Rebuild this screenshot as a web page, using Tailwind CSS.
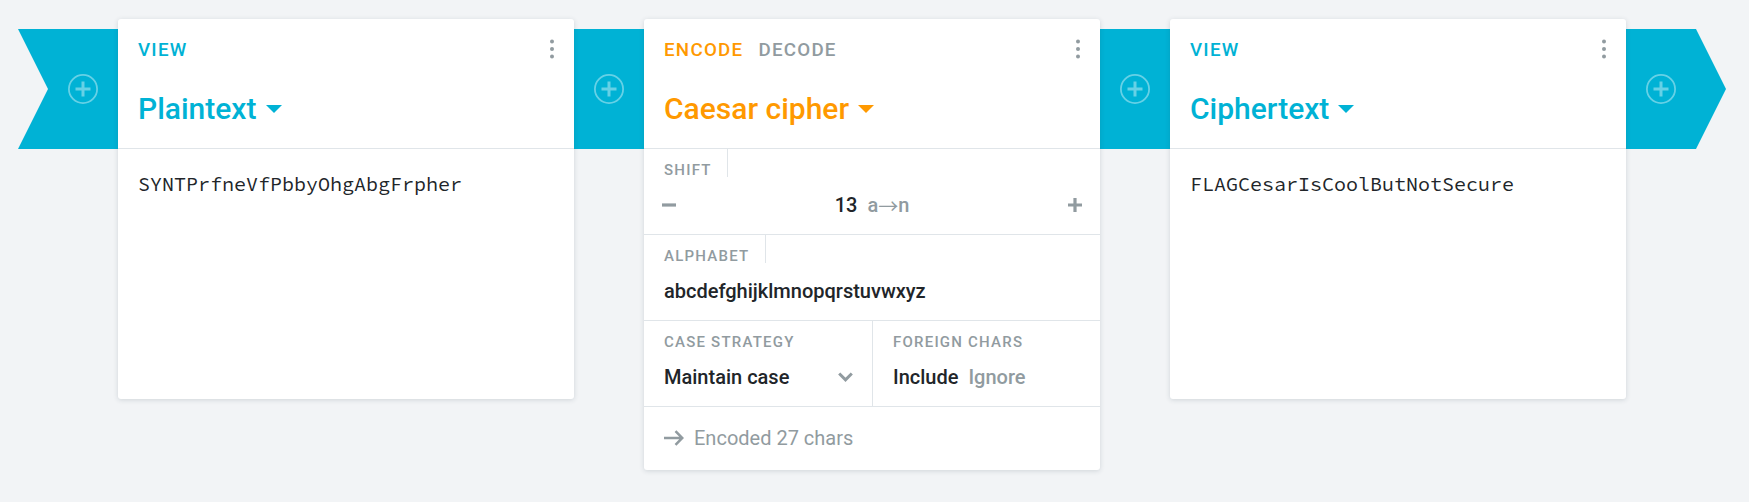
<!DOCTYPE html>
<html lang="en">
<head>
<meta charset="utf-8">
<title>Caesar cipher pipeline</title>
<script src="https://cdn.jsdelivr.net/npm/@tailwindcss/browser@4"></script>
</head>
<body class="h-[502px] overflow-hidden bg-[#f2f4f6] font-[Roboto,sans-serif] text-xl leading-6 text-[#212529]">
<svg class="hidden">
  <symbol id="add" viewBox="0 0 30 30">
    <circle cx="15" cy="15" r="14.1" fill="none" stroke="currentColor" stroke-width="1.8"/>
    <path d="M7.5 15h15M15 7.5v15" fill="none" stroke="currentColor" stroke-width="3"/>
  </symbol>
  <symbol id="dots" viewBox="0 0 4 20">
    <circle cx="2" cy="2.5" r="2"/><circle cx="2" cy="10" r="2"/><circle cx="2" cy="17.5" r="2"/>
  </symbol>
  <symbol id="caret" viewBox="0 0 16 8"><path d="M0 0h16L8 8z"/></symbol>
</svg>
<main class="flex items-start pl-[18px] pt-[19px]">
  <div class="mt-2.5 flex h-[120px] w-[100px] items-center justify-end bg-[#00b2d5] pr-5 [clip-path:polygon(0_0,100%_0,100%_100%,0_100%,30%_50%)]">
    <svg class="size-[30px] text-[#66d1e6]"><use href="#add"/></svg>
  </div>

  <section class="z-10 h-[380px] w-[456px] rounded-[3px] bg-white shadow-[0_1px_5px_rgba(30,50,70,0.16)]">
    <header class="h-[130px] border-b border-[#e0e5e9] pl-5 pr-5 pt-[18px] text-[#00b2d5]">
      <div class="flex h-6 items-center justify-between text-[18.75px] font-medium tracking-[1.25px]">
        <span class="pt-0.5 leading-5">VIEW</span>
        <svg class="h-5 w-1 fill-[#919ba0]"><use href="#dots"/></svg>
      </div>
      <div class="mt-[30px] flex items-center gap-2.5 text-[30px] font-medium leading-9">
        <span>Plaintext</span><svg class="h-2 w-4 fill-current"><use href="#caret"/></svg>
      </div>
    </header>
    <p class="pl-5 pt-[23px] font-['Source_Code_Pro',monospace]">SYNTPrfneVfPbbyOhgAbgFrpher</p>
  </section>

  <div class="mt-2.5 flex h-[120px] w-[70px] items-center justify-center bg-[#00b2d5]">
    <svg class="size-[30px] text-[#66d1e6]"><use href="#add"/></svg>
  </div>

  <section class="z-10 h-[451px] w-[456px] rounded-[3px] bg-white shadow-[0_1px_5px_rgba(30,50,70,0.16)]">
    <header class="h-[130px] border-b border-[#e0e5e9] pl-5 pr-5 pt-[18px] text-[#ff9900]">
      <div class="flex h-6 items-center text-[18.75px] font-medium tracking-[1.25px]">
        <span class="pt-0.5 leading-5">ENCODE</span><span class="ml-[15px] pt-0.5 leading-5 text-[#919ba0]">DECODE</span>
        <svg class="ml-auto h-5 w-1 fill-[#919ba0]"><use href="#dots"/></svg>
      </div>
      <div class="mt-[30px] flex items-center gap-[9px] text-[30px] font-medium leading-9">
        <span>Caesar cipher</span><svg class="h-2 w-4 fill-current"><use href="#caret"/></svg>
      </div>
    </header>
    <div class="h-[86px] border-b border-[#e0e5e9] font-medium">
      <div class="flex h-7 w-[84px] border-r border-[#e0e5e9] pl-5 pt-[9px] text-[15px] tracking-[1.22px] text-[#919ba0]">SHIFT</div>
      <div class="flex items-center justify-between pl-[18px] pr-[18px] pt-4">
        <svg class="h-3.5 w-3.5 stroke-[#919ba0]" viewBox="0 0 14 14"><path d="M0 7h14" stroke-width="3.2"/></svg>
        <div class="flex gap-2.5"><span>13</span><span class="h-6 text-[#919ba0]">a<span class="relative top-[1.5px] font-['Noto_Sans_CJK_JP',sans-serif] font-normal leading-none">→</span>n</span></div>
        <svg class="h-3.5 w-3.5 stroke-[#919ba0]" viewBox="0 0 14 14"><path d="M0 7h14M7 0v14" stroke-width="3.2"/></svg>
      </div>
    </div>
    <div class="h-[86px] border-b border-[#e0e5e9] font-medium">
      <div class="flex h-7 w-[122px] border-r border-[#e0e5e9] pl-5 pt-[9px] text-[15px] tracking-[1.22px] text-[#919ba0]">ALPHABET</div>
      <p class="pl-5 pt-4">abcdefghijklmnopqrstuvwxyz</p>
    </div>
    <div class="flex h-[86px] border-b border-[#e0e5e9] font-medium">
      <div class="w-[229px] border-r border-[#e0e5e9] pl-5 pr-[19px] pt-[9px]">
        <p class="text-[15px] tracking-[1.22px] text-[#919ba0]">CASE STRATEGY</p>
        <div class="mt-[11px] flex items-center justify-between">
          <span>Maintain case</span>
          <svg class="h-2.5 w-[15px] fill-none stroke-[#919ba0]" viewBox="0 0 15 10"><path d="M1.2 1.5l6.3 6.3l6.3-6.3" stroke-width="3"/></svg>
        </div>
      </div>
      <div class="pl-5 pt-[9px]">
        <p class="text-[15px] tracking-[1.22px] text-[#919ba0]">FOREIGN CHARS</p>
        <div class="mt-[11px] flex gap-2.5"><span>Include</span><span class="text-[#919ba0]">Ignore</span></div>
      </div>
    </div>
    <div class="flex items-center gap-2.5 pl-5 pt-[19px] text-[#919ba0]">
      <svg class="h-4 w-5 fill-none stroke-[#919ba0]" viewBox="0 0 20 16"><path d="M0 8h18M11.5 1.2L18.3 8l-6.8 6.8" stroke-width="2.5"/></svg>
      <span>Encoded 27 chars</span>
    </div>
  </section>

  <div class="mt-2.5 flex h-[120px] w-[70px] items-center justify-center bg-[#00b2d5]">
    <svg class="size-[30px] text-[#66d1e6]"><use href="#add"/></svg>
  </div>

  <section class="z-10 h-[380px] w-[456px] rounded-[3px] bg-white shadow-[0_1px_5px_rgba(30,50,70,0.16)]">
    <header class="h-[130px] border-b border-[#e0e5e9] pl-5 pr-5 pt-[18px] text-[#00b2d5]">
      <div class="flex h-6 items-center justify-between text-[18.75px] font-medium tracking-[1.25px]">
        <span class="pt-0.5 leading-5">VIEW</span>
        <svg class="h-5 w-1 fill-[#919ba0]"><use href="#dots"/></svg>
      </div>
      <div class="mt-[30px] flex items-center gap-[9px] text-[30px] font-medium leading-9">
        <span>Ciphertext</span><svg class="h-2 w-4 fill-current"><use href="#caret"/></svg>
      </div>
    </header>
    <p class="pl-5 pt-[23px] font-['Source_Code_Pro',monospace]">FLAGCesarIsCoolButNotSecure</p>
  </section>

  <div class="mt-2.5 flex h-[120px] w-[100px] items-center bg-[#00b2d5] pl-5 [clip-path:polygon(0_0,70%_0,100%_50%,70%_100%,0_100%)]">
    <svg class="size-[30px] text-[#66d1e6]"><use href="#add"/></svg>
  </div>
</main>
</body>
</html>
